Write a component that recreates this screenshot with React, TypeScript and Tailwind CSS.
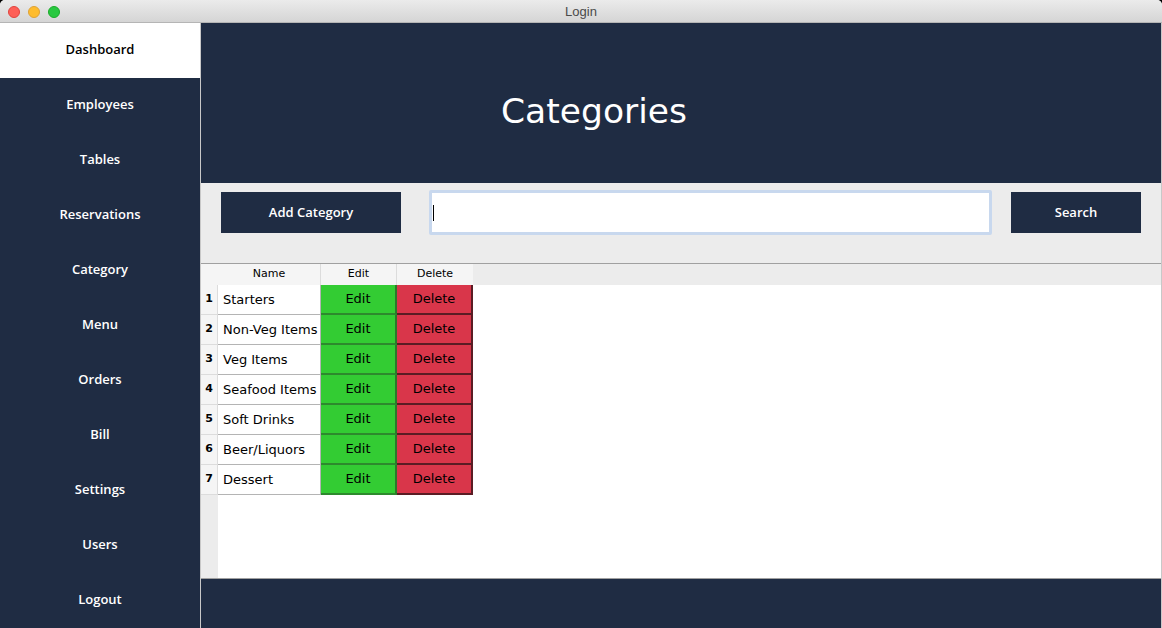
import React from 'react'

const nav = [
  'Dashboard',
  'Employees',
  'Tables',
  'Reservations',
  'Category',
  'Menu',
  'Orders',
  'Bill',
  'Settings',
  'Users',
  'Logout',
]

const categories = [
  'Starters',
  'Non-Veg Items',
  'Veg Items',
  'Seafood Items',
  'Soft Drinks',
  'Beer/Liquors',
  'Dessert',
]

const font = { fontFamily: '"DejaVu Sans", Verdana, sans-serif' }
const uiFont = { fontFamily: '"Open Sans", "DejaVu Sans", sans-serif' }

export default function App() {
  return (
    <div className="h-[628px] w-[1162px] overflow-hidden bg-black" style={font}>
      <div className="flex h-full flex-col overflow-hidden rounded-t-[5px] bg-[#ececec]">
        {/* title bar */}
        <div className="relative flex h-[23px] shrink-0 items-center justify-center border-b border-[#b5b5b5] bg-gradient-to-b from-[#ebebeb] to-[#d5d5d5] pt-[2px]">
          <div className="absolute left-[8px] top-[6px] flex gap-[8px]">
            <span className="size-[12px] rounded-full border border-[#e0443e] bg-[#fe5f57]" />
            <span className="size-[12px] rounded-full border border-[#dea236] bg-[#febc2e]" />
            <span className="size-[12px] rounded-full border border-[#1aab29] bg-[#28c840]" />
          </div>
          <span className="text-[13px] text-[#4a4a4a]" style={{ fontFamily: '"Liberation Sans", Arial, sans-serif' }}>
            Login
          </span>
        </div>

        <div className="flex min-h-0 flex-1">
          {/* sidebar */}
          <nav className="flex w-[201px] shrink-0 flex-col border-r border-[#c8c8c8] bg-[#1f2c43]" style={uiFont}>
            {nav.map((item, i) => (
              <div
                key={item}
                className={`flex h-[55px] items-center justify-center pb-[1px] text-[13px] font-semibold ${
                  i === 0 ? 'bg-white text-black' : 'text-white'
                }`}
              >
                {item}
              </div>
            ))}
          </nav>

          {/* main */}
          <main className="flex min-w-0 flex-1 flex-col border-r border-[#c8c8c8]">
            <header className="flex h-[160px] shrink-0 items-center bg-[#1f2c43] pl-[300px] pt-[18px]">
              <h1 className="text-[34.5px] text-white">Categories</h1>
            </header>

            <div className="flex h-[80px] shrink-0 items-start gap-[28px] px-[20px] pt-[9px]">
              <button className="h-[41px] w-[180px] bg-[#1f2c43] text-[13px] font-semibold text-white" style={uiFont}>
                Add Category
              </button>
              <div className="-mt-[2px] flex h-[45px] flex-1 items-center rounded-[2px] border-[3px] border-[#c8d8ee] bg-white pl-[1px]">
                <span className="h-[16px] w-px bg-black" />
              </div>
              <button className="ml-[-9px] h-[41px] w-[130px] bg-[#1f2c43] text-[13px] font-semibold text-white" style={uiFont}>
                Search
              </button>
            </div>

            {/* table */}
            <div className="flex min-h-0 flex-1 flex-col border-t border-[#a0a0a0] bg-white">
              <div className="flex h-[21px] shrink-0 bg-[#ececec] text-[11px] text-black">
                <div className="w-[17px] bg-[#f5f5f5]" />
                <div className="flex w-[103px] items-center justify-center border-r border-[#dcdcdc] bg-[#f5f5f5]">Name</div>
                <div className="flex w-[76px] items-center justify-center border-r border-[#dcdcdc] bg-[#f5f5f5]">Edit</div>
                <div className="flex w-[76px] items-center justify-center bg-[#f5f5f5]">Delete</div>
              </div>
              <div className="flex min-h-0 flex-1">
                <div className="flex w-[272px] shrink-0 flex-col">
                  {categories.map((c, i) => (
                    <div key={c} className="flex h-[30px] shrink-0 text-[13px] text-black">
                      <div className="flex w-[17px] items-center justify-center border-r border-b border-[#dcdcdc] bg-[#f5f5f5] text-[11px] font-semibold">
                        {i + 1}
                      </div>
                      <div className="flex w-[103px] items-center border-b border-r border-[#b4b4b4] pl-[5px]">{c}</div>
                      <div className="flex w-[76px] items-center justify-center border-b-2 border-r-2 border-[#2a7a2a] border-b-[#2d8a2d] bg-[#33cc33]">
                        Edit
                      </div>
                      <div className="flex w-[76px] items-center justify-center border-b-2 border-r-2 border-[#5a1c24] bg-[#d9364a] text-black">
                        Delete
                      </div>
                    </div>
                  ))}
                  <div className="flex flex-1">
                    <div className="w-[17px] bg-[#ececec]" />
                  </div>
                </div>
              </div>
            </div>

            <footer className="h-[50px] shrink-0 border-t border-[#a0a0a0] bg-[#1f2c43]" />
          </main>
        </div>
      </div>
    </div>
  )
}
